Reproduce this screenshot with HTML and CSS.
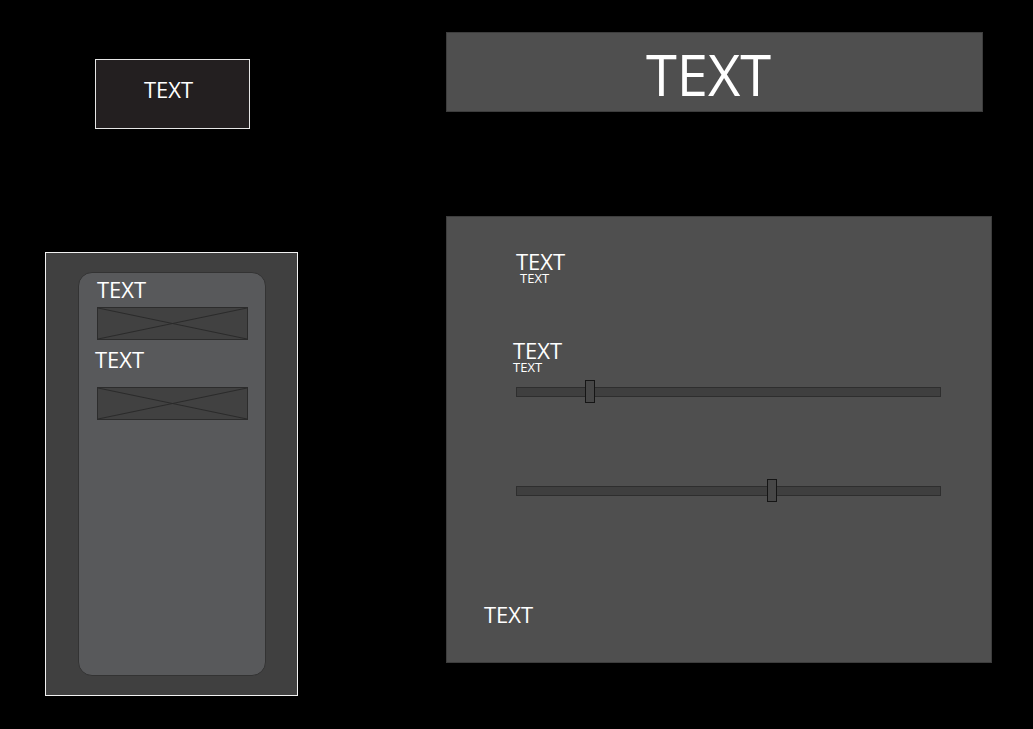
FILE: index.html
```html
<!DOCTYPE html>
<html>
<head>
<meta charset="utf-8">
<link rel="stylesheet" href="styles.css">
</head>
<body>
<div class="page">
  <div class="left-col">
    <div class="btn">TEXT</div>
    <div class="side-panel">
      <div class="side-inner">
        <div class="label l1">TEXT</div>
        <div class="ph ph1">
          <svg viewBox="0 0 151 33" preserveAspectRatio="none"><line x1="0" y1="0" x2="151" y2="33"/><line x1="0" y1="33" x2="151" y2="0"/></svg>
        </div>
        <div class="label l2">TEXT</div>
        <div class="ph ph2">
          <svg viewBox="0 0 151 33" preserveAspectRatio="none"><line x1="0" y1="0" x2="151" y2="33"/><line x1="0" y1="33" x2="151" y2="0"/></svg>
        </div>
      </div>
    </div>
  </div>
  <div class="right-col">
    <div class="header">TEXT</div>
    <div class="main-panel">
      <div class="block b1">
        <div class="big">TEXT</div>
        <div class="small s1">TEXT</div>
      </div>
      <div class="block b2">
        <div class="big">TEXT</div>
        <div class="small">TEXT</div>
      </div>
      <div class="slider sl1">
        <div class="track"></div>
        <div class="thumb" style="left:69px"></div>
      </div>
      <div class="slider sl2">
        <div class="track"></div>
        <div class="thumb" style="left:251px"></div>
      </div>
      <div class="foot">TEXT</div>
    </div>
  </div>
</div>
</body>
</html>
```

FILE: styles.css
```css
* { box-sizing: border-box; }
html, body {
  margin: 0;
  padding: 0;
  background: #000;
}
body {
  width: 1033px;
  height: 729px;
  overflow: hidden;
  font-family: "Open Sans", "Noto Sans", sans-serif;
  color: #fff;
}
.page {
  display: flex;
  align-items: flex-start;
  padding-left: 45px;
}
.left-col {
  width: 253px;
  display: flex;
  flex-direction: column;
}
.btn {
  margin-top: 59px;
  margin-left: 50px;
  width: 155px;
  height: 70px;
  background: #231f20;
  border: 1px solid #e6e6e6;
  display: flex;
  align-items: center;
  justify-content: center;
  padding-right: 8px;
  padding-bottom: 11px;
  font-size: 22px;
  line-height: 1;
}
.side-panel {
  margin-top: 123px;
  width: 253px;
  height: 444px;
  background: #404040;
  border: 1px solid #f2f2f2;
  padding: 19px 0 0 32px;
}
.side-inner {
  width: 188px;
  height: 404px;
  background: #58595b;
  border: 1px solid #333;
  border-radius: 14px;
  padding: 5px 0 0 18px;
  display: flex;
  flex-direction: column;
}
.label {
  font-size: 22px;
  line-height: 22px;
}
.l2 { margin-top: 8px; margin-left: -2px; }
.ph {
  width: 151px;
  height: 33px;
  background: #414141;
  border: 1px solid #2c2c2c;
}
.ph svg {
  display: block;
  width: 100%;
  height: 100%;
}
.ph line {
  stroke: #2a2a2a;
  stroke-width: 1;
}
.ph1 { margin-top: 7px; }
.ph2 { margin-top: 17px; }

.right-col {
  margin-left: 148px;
  display: flex;
  flex-direction: column;
  padding-top: 32px;
}
.header {
  width: 537px;
  height: 80px;
  background: #4f4f4f;
  border: 1px solid #3d3d3d;
  display: flex;
  align-items: center;
  justify-content: center;
  padding-right: 12px;
  padding-top: 4px;
  font-size: 56px;
  line-height: 1;
}
.main-panel {
  margin-top: 104px;
  width: 546px;
  height: 447px;
  background: #4f4f4f;
  border: 1px solid #3d3d3d;
  display: flex;
  flex-direction: column;
  padding-left: 69px;
}
.block {
  display: flex;
  flex-direction: column;
}
.big {
  font-size: 22px;
  line-height: 22px;
}
.small {
  font-size: 13px;
  line-height: 13px;
}
.b1 { margin-top: 33px; }
.s1 { margin-left: 4px; }
.b2 { margin-top: 54px; margin-left: -3px; }
.slider {
  position: relative;
  width: 425px;
  height: 23px;
  display: flex;
  align-items: center;
}
.sl1 { margin-top: 6px; }
.sl2 { margin-top: 76px; }
.track {
  width: 100%;
  height: 10px;
  background: #3f3f3f;
  border: 1px solid #2e2e2e;
}
.thumb {
  position: absolute;
  top: 0;
  width: 10px;
  height: 23px;
  background: #474747;
  border: 1px solid #151515;
}
.foot {
  margin-top: 101px;
  margin-left: -32px;
  font-size: 22px;
  line-height: 22px;
}
```
